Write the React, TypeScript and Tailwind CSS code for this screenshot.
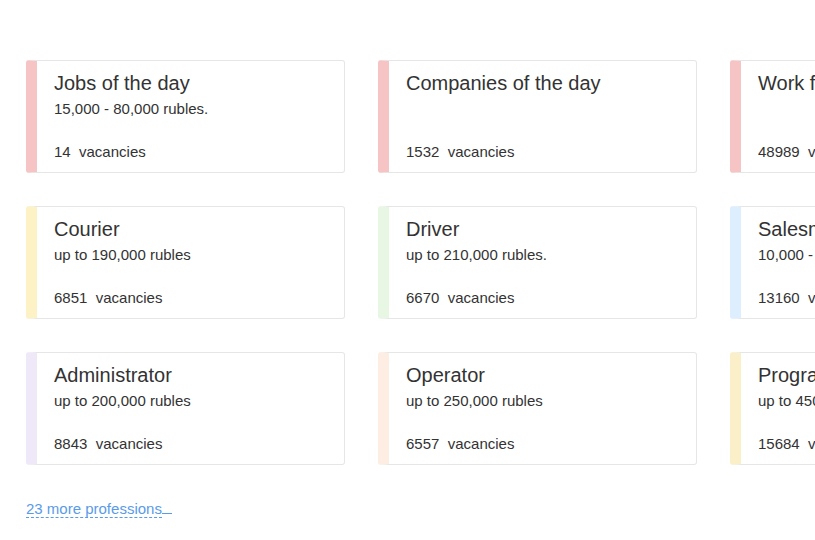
const cards = [
  { title: 'Jobs of the day', salary: '15,000 - 80,000 rubles.', count: '14', bar: 'border-l-[#f6c4c4]' },
  { title: 'Companies of the day', salary: '', count: '1532', bar: 'border-l-[#f6c4c4]' },
  { title: 'Work from home', salary: '', count: '48989', bar: 'border-l-[#f6c4c4]' },
  { title: 'Courier', salary: 'up to 190,000 rubles', count: '6851', bar: 'border-l-[#fdf1c6]' },
  { title: 'Driver', salary: 'up to 210,000 rubles.', count: '6670', bar: 'border-l-[#e7f7e3]' },
  { title: 'Salesman', salary: '10,000 - 90,000 rubles', count: '13160', bar: 'border-l-[#ddeeff]' },
  { title: 'Administrator', salary: 'up to 200,000 rubles', count: '8843', bar: 'border-l-[#efe8f9]' },
  { title: 'Operator', salary: 'up to 250,000 rubles', count: '6557', bar: 'border-l-[#fdede2]' },
  { title: 'Programmer', salary: 'up to 450,000 rubles', count: '15684', bar: 'border-l-[#fbefc9]' },
];

export default function App() {
  return (
    <div
      className="w-[815px] h-[540px] overflow-hidden bg-white text-[#333]"
      style={{ fontFamily: '"Liberation Sans", Arial, sans-serif' }}
    >
      <div className="pl-[26px] pt-[60px]">
        <div className="grid grid-cols-[319px_319px_319px] gap-x-[33px] gap-y-[33px] w-[1023px]">
          {cards.map((c) => (
            <div
              key={c.title}
              className={`h-[113px] flex flex-col border border-[#e6e6e6] border-l-[11px] rounded-[3px] pl-[17px] pt-[9px] pb-[10px] ${c.bar}`}
            >
              <div className="text-[20px] leading-[26px] whitespace-nowrap">{c.title}</div>
              <div className="text-[15px] leading-[26px] h-[26px] whitespace-nowrap">{c.salary}</div>
              <div className="mt-auto text-[15px] leading-[20px] whitespace-pre">
                {c.count}  vacancies
              </div>
            </div>
          ))}
        </div>
        <div className="mt-[34px] text-[15px] leading-[20px]">
          <a href="#" className="text-[#5a9be8]">
            <span className="border-b border-dashed border-[#5a9be8]">23 more professions</span>
            <span className="inline-block w-[10px] border-b border-[#5a9be8] align-baseline h-[15px]"></span>
          </a>
        </div>
      </div>
    </div>
  );
}
